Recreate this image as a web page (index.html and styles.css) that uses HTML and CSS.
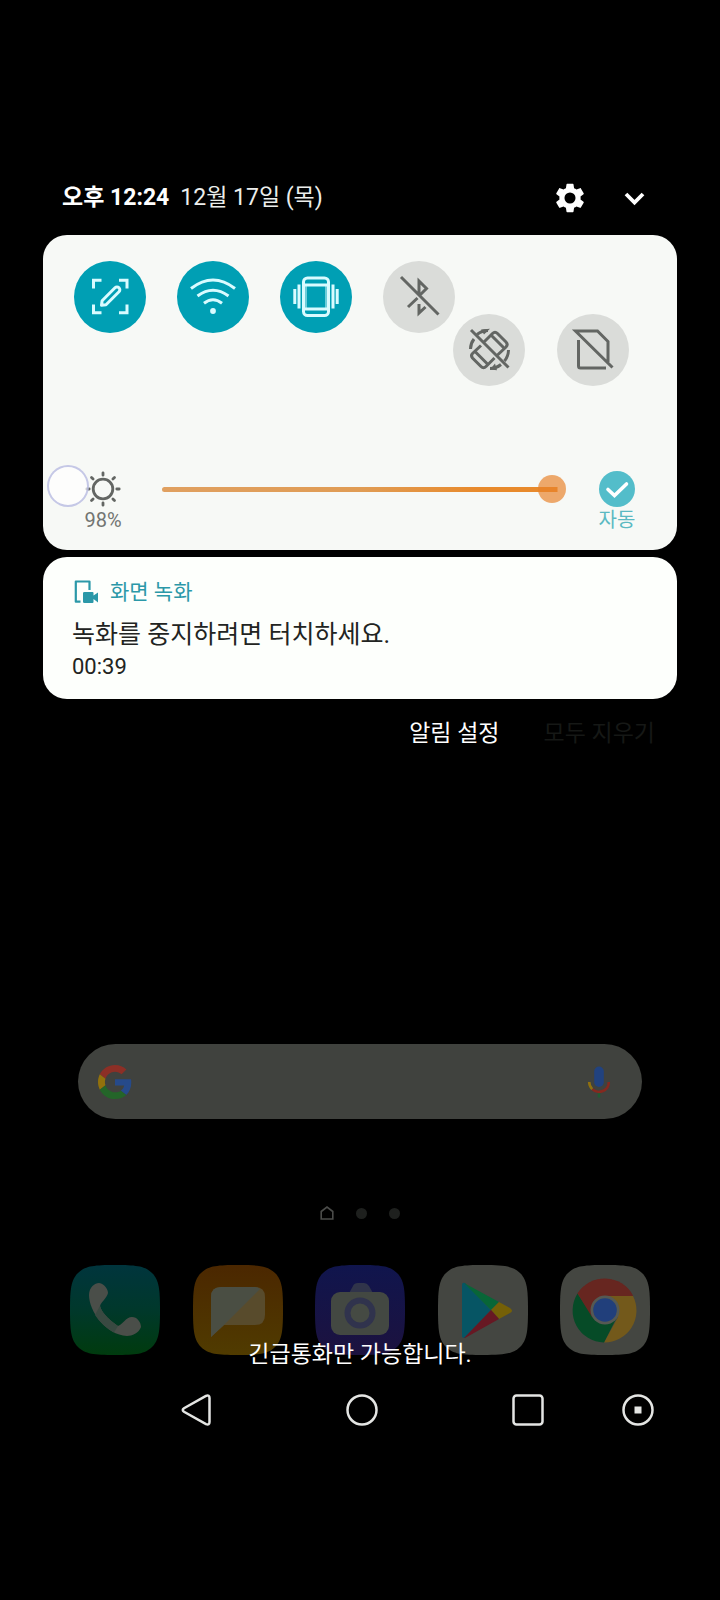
FILE: index.html
```html
<!DOCTYPE html>
<html lang="ko">
<head>
<meta charset="utf-8">
<meta name="viewport" content="width=device-width, initial-scale=1">
<title>알림</title>
<link rel="stylesheet" href="styles.css">
</head>
<body>
<main class="screen">
  <header class="status">
    <time class="clock">오후 12:24</time>
    <span class="date">12월 17일 (목)</span>
    <button class="icon-btn gear" aria-label="설정">
      <svg width="34" height="34" viewBox="0 0 24 24" fill="#fff"><path d="M19.43 12.98c.04-.32.07-.64.07-.98s-.03-.66-.07-.98l2.11-1.65c.19-.15.24-.42.12-.64l-2-3.46c-.12-.22-.39-.3-.61-.22l-2.49 1c-.52-.4-1.08-.73-1.69-.98l-.38-2.65C14.46 2.18 14.25 2 14 2h-4c-.25 0-.46.18-.49.42l-.38 2.65c-.61.25-1.17.59-1.69.98l-2.49-1c-.23-.09-.49 0-.61.22l-2 3.46c-.13.22-.07.49.12.64l2.11 1.65c-.04.32-.07.65-.07.98s.03.66.07.98l-2.11 1.65c-.19.15-.24.42-.12.64l2 3.46c.12.22.39.3.61.22l2.49-1c.52.4 1.08.73 1.69.98l.38 2.65c.03.24.24.42.49.42h4c.25 0 .46-.18.49-.42l.38-2.65c.61-.25 1.17-.59 1.69-.98l2.49 1c.23.09.49 0 .61-.22l2-3.46c.12-.22.07-.49-.12-.64l-2.11-1.65zM12 15.9a3.9 3.9 0 1 1 0-7.800 3.900 3.900 0 0 1 0 7.800z"/></svg>
    </button>
    <button class="icon-btn" aria-label="펼치기">
      <svg width="34" height="34" viewBox="0 0 34 34" fill="none" stroke="#fff" stroke-width="3.800"><path d="M9 13l8.500 8.500 8.500-8.500"/></svg>
    </button>
  </header>

  <section class="panel">
    <div class="tiles">
      <button class="tile on" aria-pressed="true" aria-label="캡처">
        <svg viewBox="0 0 72 72"><path d="M19.500 27.500V19.300H27.500M45 19.300H53V27.500M53 43.500V51.700H45M27.500 51.700H19.500V43.500"/><path d="M27.500 44.300l.6-4.600L41 26.800a2.700 2.700 0 0 1 4 4L32 43.700z" stroke-linejoin="round"/></svg>
      </button>
      <button class="tile on" aria-pressed="true" aria-label="Wi-Fi">
        <svg viewBox="0 0 72 72"><path d="M14 27.500Q36 10.500 58 27.500M20.500 35Q36 23.500 51.500 35M27 42.300Q36 35.300 45 42.300"/><circle cx="36" cy="50" r="2.900" fill="#d9fbff" stroke="none"/></svg>
      </button>
      <button class="tile on" aria-pressed="true" aria-label="진동">
        <svg viewBox="0 0 72 72"><rect x="23.500" y="17" width="25" height="37.500" rx="4"/><path d="M23.500 24H48.500M23.500 48H48.500M19 23.500V47.500M14.800 28V43M53 23.500V47.500M57.200 28V43"/><path d="M26 24V48M46 24V48" stroke-width="1"/></svg>
      </button>
      <button class="tile" aria-pressed="false" aria-label="블루투스">
        <svg viewBox="0 0 72 72"><path d="M18 16L55.500 53.500M36 34V20l7.500 7.500L36 35M36 43V52l6.500-6M25 46l9.500-9"/></svg>
      </button>
    </div>
    <div class="tiles shifted">
      <button class="tile" aria-pressed="false" aria-label="화면 회전">
        <svg viewBox="0 0 72 72"><path d="M18 16L55.500 53.500M30.500 28.500L39.500 19.500Q42 17 44.500 19.500L53 28Q55.500 30.500 53 33L44 41.500M38.500 21.500L50.500 33.500M28 31.500L19.500 39.500Q17.500 41.500 19.500 44L28 52.500Q30.500 55 33 52.500L41.500 44M22 37.500L34 49.500"/><path d="M24 20.500Q29 16.500 35 16.500M17.500 35Q17.500 29.500 21 25M55.500 36Q55.500 42 51.500 47M37 54.500Q43 54.500 48 50.500"/><path d="M28 15.500l9-.8-6 5.800zM44 56.300l-7-.8 5-6z" fill="#636663" stroke="none"/></svg>
      </button>
      <button class="tile" aria-pressed="false" aria-label="모바일 데이터">
        <svg viewBox="0 0 72 72"><path d="M55.500 53.500L18.500 17H40.500L51 27.500V48M21.500 26V52Q21.500 54 23.500 54H49"/></svg>
      </button>
    </div>
    <div class="brightness">
      <label class="level" for="bright">
        <svg width="36" height="36" viewBox="0 0 36 36" fill="none" stroke="#636663" stroke-width="2.800" stroke-linecap="round"><circle cx="18" cy="18" r="9.800"/><path d="M18 1.800v2.400M18 31.800v2.400M1.800 18h2.400M31.800 18h2.400M6.500 6.500l1.600 1.600M27.900 27.900l1.600 1.600M6.500 29.500l1.600-1.600M27.900 8.100l1.600-1.600"/></svg>
        <span>98%</span>
      </label>
      <input class="slider" id="bright" type="range" min="0" max="100" value="98" aria-label="밝기">
      <label class="auto">
        <span class="auto-mark">
          <input type="checkbox" checked>
          <svg viewBox="0 0 36 36" fill="none" stroke="#fff" stroke-width="3.600" stroke-linecap="round"><path d="M9 18.500l6.500 6L27.500 13"/></svg>
        </span>
        <span>자동</span>
      </label>
    </div>
    <span class="touch"></span>
  </section>

  <article class="card">
    <h2 class="app">
      <svg width="26" height="24" viewBox="0 0 26 24"><path d="M6.500 21.700H1.800V1.500H15.500V10" fill="none" stroke="#2b98a8" stroke-width="2.200" stroke-linejoin="round"/><path d="M10.500 12h8q1 0 1 1v2.500l4.500-3v10L19.500 19v3q0 1-1 1h-8q-1.500 0-1.500-1v-9q0-1 1.500-1z" fill="#2b98a8"/></svg>
      화면 녹화
    </h2>
    <p class="message">녹화를 중지하려면 터치하세요.</p>
    <p class="elapsed">00:39</p>
  </article>

  <div class="actions">
    <button class="text-btn">알림 설정</button>
    <button class="text-btn faded">모두 지우기</button>
  </div>

  <form class="search">
    <svg width="34" height="34" viewBox="0 0 48 48"><path fill="#8c2f26" d="M24 9.500c3.540 0 6.710 1.220 9.210 3.600l6.850-6.850C35.900 2.380 30.470 0 24 0 14.620 0 6.510 5.380 2.560 13.220l7.980 6.190C12.430 13.720 17.740 9.500 24 9.500z"/><path fill="#264a8a" d="M46.980 24.550c0-1.570-.15-3.090-.38-4.550H24v9.020h12.940c-.58 2.960-2.260 5.480-4.780 7.180l7.730 6c4.510-4.180 7.090-10.360 7.090-17.650z"/><path fill="#92710c" d="M10.530 28.590c-.48-1.450-.76-2.990-.76-4.590s.27-3.140.76-4.590l-7.980-6.190C.92 16.460 0 20.120 0 24c0 3.880.92 7.540 2.560 10.780l7.970-6.190z"/><path fill="#246529" d="M24 48c6.480 0 11.930-2.130 15.890-5.810l-7.730-6c-2.150 1.450-4.920 2.300-8.160 2.300-6.260 0-11.570-4.220-13.470-9.910l-7.980 6.190C6.510 42.620 14.620 48 24 48z"/></svg>
    <input class="query" type="text" aria-label="검색">
    <button class="icon-btn" type="button" aria-label="음성 검색">
      <svg width="34" height="34" viewBox="0 0 34 34" fill="none" stroke-width="2.600"><rect x="12.200" y="1.500" width="9.600" height="20.500" rx="4.800" fill="#21427f"/><path d="M17 27v5.500" stroke="#205c33"/><path d="M10.200 24.100A9.800 9.800 0 0 0 26.800 17" stroke="#85291f"/><path d="M7.200 17A9.800 9.800 0 0 0 10.200 24.100" stroke="#90700f"/></svg>
    </button>
  </form>

  <div class="pages">
    <svg width="14" height="14" viewBox="0 0 14 14" fill="none" stroke="#4b4c4a" stroke-width="1.600"><path d="M1.200 13V5.500L7 1l5.800 4.500V13z"/></svg>
    <span class="dot"></span>
    <span class="dot"></span>
  </div>

  <div class="dock">
    <button class="app-icon" aria-label="전화">
      <svg viewBox="0 0 90 90"><defs><linearGradient id="g1" x2="0" y2="1"><stop stop-color="#00353d"/><stop offset=".5" stop-color="#00382b"/><stop offset="1" stop-color="#003b0e"/></linearGradient><path id="sq" d="M45 0C66 0 75 1 82 8S90 24 90 45 89 75 82 82 66 90 45 90 15 89 8 82 0 66 0 45 1 15 8 8 24 0 45 0Z"/></defs><use href="#sq" fill="url(#g1)"/><path d="M19 30C19 22 25 18 29 18 35 19 38 25 38 28 37 33 31 37 30 41 32 49 42 57 48 61 52 60 56 52 62 52 67 52 71 57 71 62 69 68 62 71 57 71 36 70 19 46 19 30Z" fill="#4a4e49"/><path d="M32 37L30 41C32 49 42 57 48 61L44 67.500Q32 61 25 50Z" fill="#394941"/></svg>
    </button>
    <button class="app-icon" aria-label="메시지">
      <svg viewBox="0 0 90 90"><defs><linearGradient id="g2" x2="0" y2="1"><stop stop-color="#4b2700"/><stop offset="1" stop-color="#503b00"/></linearGradient></defs><use href="#sq" fill="url(#g2)"/><path d="M18 72V32Q18 22 28 22H62Q72 22 72 32V50Q72 60 62 60H31Z" fill="#584b2c"/><path d="M18 72V32Q18 22 28 22H62Q65 22 67 24L31 60Z" fill="#4a4e43"/></svg>
    </button>
    <button class="app-icon" aria-label="카메라">
      <svg viewBox="0 0 90 90"><defs><linearGradient id="g3" x2="0" y2="1"><stop stop-color="#10154d"/><stop offset="1" stop-color="#1c123f"/></linearGradient></defs><use href="#sq" fill="url(#g3)"/><path d="M33 30L38 21Q39 18 43 18H49Q52 18 54 21L59 30Z" fill="#30344a"/><rect x="16" y="27" width="58" height="43" rx="9" fill="#434842"/><circle cx="45" cy="48" r="12.500" fill="#454a43" stroke="#30334d" stroke-width="6"/></svg>
    </button>
    <button class="app-icon" aria-label="Play 스토어">
      <svg viewBox="0 0 90 90"><use href="#sq" fill="#444641"/><path d="M24 20Q24 17 27 18L53 45 27 73Q24 73 24 71Z" fill="#065564"/><path d="M26 18L61 37 53 45Z" fill="#086637"/><path d="M61 37L72 43Q76 46 72 48L61 54 53 45Z" fill="#756007"/><path d="M53 45L61 54 27 73H26Z" fill="#671823"/></svg>
    </button>
    <button class="app-icon" aria-label="Chrome">
      <svg viewBox="0 0 90 90"><use href="#sq" fill="#444641"/><path d="M45 45L17.500 28.500A32 32 0 0 1 73 30.500Z" fill="#672620"/><path d="M45 45V31H73A32 32 0 0 1 44 77.500L58 52Z" fill="#73591b"/><path d="M45 45L32 50 17.500 28.500A32 32 0 0 0 44 77.500L56 54Z" fill="#064b27"/><path d="M45 31H73L72 30A32 32 0 0 0 17.500 28.500L32 52Z" fill="#672620"/><circle cx="45" cy="45" r="14.500" fill="#555953"/><circle cx="45" cy="45" r="11.800" fill="#213f7b"/></svg>
    </button>
    <p class="carrier">긴급통화만 가능합니다.</p>
  </div>

  <nav class="navbar">
    <button class="icon-btn" aria-label="뒤로"><svg width="34" height="34" viewBox="0 0 34 34"><path d="M27 2.800L5 15.200Q2.500 17 5 18.800L27 31.200Q30.500 32.500 30.500 29V5Q30.500 1.500 27 2.800Z"/></svg></button>
    <button class="icon-btn" aria-label="홈"><svg width="34" height="34" viewBox="0 0 34 34"><circle cx="17" cy="17" r="14.500"/></svg></button>
    <button class="icon-btn" aria-label="최근 앱"><svg width="34" height="34" viewBox="0 0 34 34"><rect x="2.500" y="2.500" width="29" height="29" rx="3"/></svg></button>
    <button class="icon-btn" aria-label="녹화"><svg width="34" height="34" viewBox="0 0 34 34"><circle cx="17" cy="17" r="14.500"/><rect x="13.500" y="13.500" width="7" height="7" fill="#e4e5e3" stroke="none"/></svg></button>
  </nav>
</main>
</body>
</html>
```

FILE: styles.css
```css
* { box-sizing: border-box; }
html { background: #000; }
body {
  margin: 0;
  color: #fff;
  font-family: Roboto, "Noto Sans CJK KR", sans-serif;
  font-size: 23px;
}
h2, p { margin: 0; font-weight: 400; }
button {
  padding: 0;
  border: 0;
  background: none;
  color: inherit;
  font: inherit;
}
svg { display: block; }
.screen {
  display: flex;
  flex-direction: column;
  padding: 180px 43px 172px;
}

.status {
  display: flex;
  align-items: center;
  gap: 11px;
  height: 36px;
  margin-bottom: 19px;
  padding: 0 26px 0 19px;
  line-height: 36px;
}
.clock { font-weight: 700; }
.date { color: #eceeec; }
.gear { margin-left: auto; margin-right: 19px; }
.icon-btn { width: 34px; height: 34px; flex: none; }

.panel {
  position: relative;
  padding: 26px 42px 16px 31px;
  border-radius: 24px;
  background: #f7f9f6;
}
.tiles { display: flex; gap: 31px; }
.tiles.shifted {
  justify-content: flex-end;
  gap: 32px;
  margin-top: -19px;
  padding-right: 6px;
}
.tile {
  width: 72px;
  height: 72px;
  border-radius: 50%;
  background: #dadcd9;
}
.tile svg {
  fill: none;
  stroke: #636663;
  stroke-width: 3px;
}
.tile.on { background: #009fb4; }
.tile.on svg { stroke: #d9fbff; }

.brightness {
  display: flex;
  justify-content: space-between;
  margin-top: 85px;
  font-size: 20px;
  line-height: 27px;
}
.level, .auto {
  display: flex;
  flex-direction: column;
  align-items: center;
  width: 58px;
  flex: none;
  color: #727572;
}
.auto { width: 36px; color: #5bb9c2; white-space: nowrap; }
.auto-mark { display: grid; }
.auto-mark > * { grid-area: 1 / 1; width: 36px; height: 36px; margin: 0; }
.auto-mark input {
  appearance: none;
  border-radius: 50%;
  background: #53bdca;
}
.auto-mark svg { pointer-events: none; }
.slider {
  appearance: none;
  flex: 1;
  min-width: 0;
  height: 36px;
  margin: 0 25px 0 30px;
  background: none;
}
.slider::-webkit-slider-runnable-track {
  height: 5px;
  border-radius: 3px;
  background: linear-gradient(90deg, #e0a060, #e09c54 50%, #e88a2c 80%) no-repeat 0 0 / 96% 100%;
}
.slider::-webkit-slider-thumb {
  appearance: none;
  width: 28px;
  height: 28px;
  margin-top: -12px;
  border-radius: 50%;
  background: rgba(232, 130, 42, 0.68);
}
.touch {
  position: absolute;
  left: 4px;
  top: 230px;
  width: 42px;
  height: 42px;
  border: 2px solid rgba(160, 163, 215, 0.6);
  border-radius: 50%;
  background: rgba(255, 255, 255, 0.7);
  pointer-events: none;
}

.card {
  margin-top: 7px;
  padding: 21px 29px 18px;
  border-radius: 24px;
  background: #fdfffc;
  color: #222422;
}
.app {
  display: flex;
  align-items: center;
  gap: 10px;
  padding-left: 2px;
  color: #2b98a8;
  font-size: 21px;
  line-height: 28px;
}
.message { margin-top: 12px; font-size: 25px; line-height: 34px; }
.elapsed { margin-top: 1px; font-size: 22px; line-height: 28px; }

.actions {
  display: flex;
  justify-content: flex-end;
  gap: 44px;
  margin-top: 17px;
  padding-right: 22px;
}
.text-btn { line-height: 36px; }
.faded { color: #161816; }

.search {
  display: flex;
  align-items: center;
  height: 75px;
  margin: 292px 35px 0;
  padding: 0 26px 0 20px;
  border-radius: 38px;
  background: #40423e;
}
.query {
  flex: 1;
  min-width: 0;
  border: 0;
  background: none;
  color: #999;
  font: inherit;
}

.pages {
  display: flex;
  justify-content: center;
  align-items: center;
  gap: 22px;
  height: 14px;
  margin-top: 87px;
}
.dot {
  width: 11px;
  height: 11px;
  border-radius: 50%;
  background: #1e201e;
}

.dock {
  position: relative;
  display: flex;
  justify-content: space-between;
  margin: 45px 27px 0;
}
.app-icon { width: 90px; height: 90px; }
.carrier {
  position: absolute;
  inset: auto 0 -18px;
  line-height: 36px;
  text-align: center;
}

.navbar {
  display: grid;
  grid-template-columns: 166px 166px 110px 34px;
  justify-content: end;
  align-items: center;
  height: 36px;
  margin-top: 37px;
  padding-right: 22px;
}
.navbar svg {
  fill: none;
  stroke: #e4e5e3;
  stroke-width: 2.5px;
}
```
